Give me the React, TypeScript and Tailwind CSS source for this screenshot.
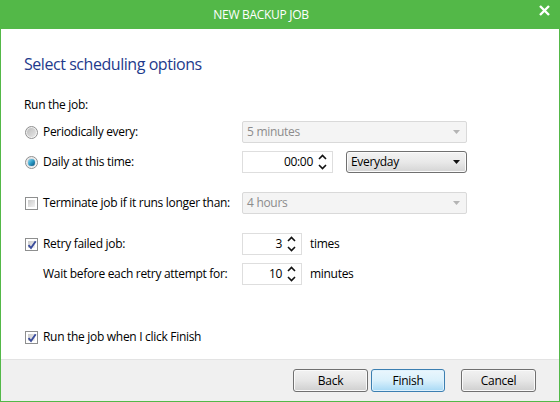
import React from "react";

const font = { fontFamily: '"Open Sans", "Noto Sans", sans-serif' };

function Radio({ checked }: { checked?: boolean }) {
  return (
    <span className="relative flex h-[13px] w-[13px] items-center justify-center rounded-full border border-[#8f8f8f] bg-gradient-to-br from-[#e8e8e8] to-[#f8f8f8]">
      {checked ? (
        <span className="h-[7px] w-[7px] rounded-full bg-gradient-to-br from-[#8fdcf2] via-[#2b9cc7] to-[#0b4f7a] shadow-[0_0_1px_#0b4f7a]" />
      ) : (
        <span className="h-[9px] w-[9px] rounded-full bg-gradient-to-br from-[#bdbdbd] to-[#e6e6e6]" />
      )}
    </span>
  );
}

function Check({ checked }: { checked?: boolean }) {
  return (
    <span className="relative flex h-[13px] w-[13px] items-center justify-center border border-[#8e8f8f] bg-white">
      <span className="absolute inset-[2px] bg-gradient-to-br from-[#cbcbcb] to-[#f2f2f2]" />
      {checked && (
        <svg className="absolute left-[1px] top-[1px]" width="10" height="10" viewBox="0 0 10 10">
          <path d="M1.5 5.2 L4 8 L8.7 1.3" fill="none" stroke="#3b4d9c" strokeWidth="1.9" />
        </svg>
      )}
    </span>
  );
}

function DisabledSelect({ value }: { value: string }) {
  return (
    <div className="flex h-[22px] w-[225px] items-center justify-between rounded-[2px] border border-[#d9d9d9] bg-[#f4f4f4] pl-[4px] pr-[6px] text-[#8c8c8c]">
      <span>{value}</span>
      <svg width="7" height="4" viewBox="0 0 7 4">
        <path d="M0 0 H7 L3.5 4 Z" fill="#b4b4b4" />
      </svg>
    </div>
  );
}

function Spinner() {
  return (
    <svg width="9" height="16" viewBox="0 0 9 16" className="shrink-0">
      <path d="M1 5 L4.5 1.5 L8 5" fill="none" stroke="#111" strokeWidth="1.6" />
      <path d="M1 11 L4.5 14.5 L8 11" fill="none" stroke="#111" strokeWidth="1.6" />
    </svg>
  );
}

function SpinInput({ value, width }: { value: string; width: string }) {
  return (
    <div className={`flex h-[22px] items-center justify-end border border-[#dedede] bg-white pr-[5px] ${width}`}>
      <span className="mr-[5px] text-black">{value}</span>
      <Spinner />
    </div>
  );
}

function Btn({ label, primary }: { label: string; primary?: boolean }) {
  return (
    <button
      className={
        primary
          ? "flex h-[23px] w-[74px] items-center justify-center rounded-[3px] border border-[#3c7fb1] bg-gradient-to-b from-[#eaf6fd] via-[#d9f0fc] to-[#a7d9f5] text-black shadow-[inset_0_0_0_1px_#dff2fd]"
          : "flex h-[23px] w-[75px] items-center justify-center rounded-[3px] border border-[#707070] bg-gradient-to-b from-[#f2f2f2] via-[#e6e6e6] to-[#cfcfcf] text-black shadow-[inset_0_0_0_1px_#fafafa]"
      }
    >
      {label}
    </button>
  );
}

export default function App() {
  return (
    <div className="flex h-[402px] w-[560px] flex-col bg-[#53b848] text-[12px] tracking-[-0.3px] text-black" style={font}>
      <div className="relative flex h-[29px] shrink-0 items-center justify-center pr-[38px] text-[12px] text-white">
        <span>NEW BACKUP JOB</span>
        <svg className="absolute right-[10px] top-[5px]" width="11" height="11" viewBox="0 0 11 11">
          <path d="M1 1 L10 10 M10 1 L1 10" stroke="#fff" strokeWidth="2.4" />
        </svg>
      </div>
      <div className="mx-[1px] mb-[1px] flex flex-1 flex-col bg-white">
        <div className="flex flex-1 flex-col pl-[23px]">
          <div className="mt-[24px] h-[22px] text-[16px] leading-[22px] tracking-[-0.45px] text-[#1e3a8c]">
            Select scheduling options
          </div>
          <div className="mt-[20px] flex h-[20px] items-center">Run the job:</div>

          <div className="mt-[6px] flex h-[22px] items-center">
            <div className="flex w-[218px] items-center gap-[5px] pl-[1px]">
              <Radio />
              <span>Periodically every:</span>
            </div>
            <DisabledSelect value="5 minutes" />
          </div>

          <div className="mt-[8px] flex h-[22px] items-center">
            <div className="flex w-[218px] items-center gap-[5px] pl-[1px]">
              <Radio checked />
              <span>Daily at this time:</span>
            </div>
            <SpinInput value="00:00" width="w-[91px]" />
            <div className="ml-[13px] flex h-[22px] w-[121px] items-center justify-between rounded-[3px] border border-[#707070] bg-gradient-to-b from-[#f3f3f3] via-[#e9e9e9] to-[#d4d4d4] pl-[4px] pr-[6px] shadow-[inset_0_0_0_1px_#fbfbfb]">
              <span>Everyday</span>
              <svg width="7" height="4" viewBox="0 0 7 4">
                <path d="M0 0 H7 L3.5 4 Z" fill="#111" />
              </svg>
            </div>
          </div>

          <div className="mt-[19px] flex h-[22px] items-center">
            <div className="flex w-[218px] items-center gap-[5px] pl-[1px]">
              <Check />
              <span>Terminate job if it runs longer than:</span>
            </div>
            <DisabledSelect value="4 hours" />
          </div>

          <div className="mt-[19px] flex h-[22px] items-center">
            <div className="flex w-[218px] items-center gap-[5px] pl-[1px]">
              <Check checked />
              <span>Retry failed job:</span>
            </div>
            <SpinInput value="3" width="w-[60px]" />
            <span className="ml-[8px]">times</span>
          </div>

          <div className="mt-[8px] flex h-[22px] items-center">
            <div className="flex w-[218px] items-center pl-[19px]">
              <span>Wait before each retry attempt for:</span>
            </div>
            <SpinInput value="10" width="w-[60px]" />
            <span className="ml-[8px]">minutes</span>
          </div>

          <div className="mt-[41px] flex h-[22px] items-center">
            <div className="flex items-center gap-[5px] pl-[1px]">
              <Check checked />
              <span>Run the job when I click Finish</span>
            </div>
          </div>
        </div>
        <div className="flex h-[42px] shrink-0 items-start justify-end border-t border-[#e3e3e3] bg-[#f0f0f0] pr-[23px] pt-[9px]">
          <Btn label="Back" />
          <div className="ml-[3px]">
            <Btn label="Finish" primary />
          </div>
          <div className="ml-[16px]">
            <Btn label="Cancel" />
          </div>
        </div>
      </div>
    </div>
  );
}
